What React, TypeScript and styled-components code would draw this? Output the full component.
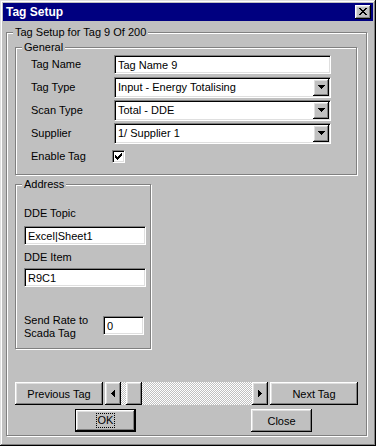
import styled, { createGlobalStyle, css } from "styled-components";

const TAG = 9;
const TAG_COUNT = 200;
const TRACK_WIDTH = 131;
const THUMB_WIDTH = 16;

const GlobalStyle = createGlobalStyle`
  html, body {
    margin: 0;
    padding: 0;
    background: #c0c0c0;
  }
  body {
    font-family: "Liberation Sans", Arial, sans-serif;
    font-size: 11px;
    color: #000;
  }
`;

const raised = css`
  box-shadow: inset -1px -1px #000, inset 1px 1px #fff, inset -2px -2px #808080,
    inset 2px 2px #dfdfdf;
`;

const sunken = css`
  border: 1px solid;
  border-color: #808080 #fff #fff #808080;
  box-shadow: inset 1px 1px #000, inset -1px -1px #dfdfdf;
`;

const CloseGlyph = () => (
  <svg width="8" height="7" viewBox="0 0 8 7" shapeRendering="crispEdges">
    <path
      d="M0 0h2v1h-2z M6 0h2v1h-2z M1 1h2v1h-2z M5 1h2v1h-2z M2 2h4v1h-4z M3 3h2v1h-2z M2 4h4v1h-4z M1 5h2v1h-2z M5 5h2v1h-2z M0 6h2v1h-2z M6 6h2v1h-2z"
      fill="#000"
    />
  </svg>
);

const DownArrow = () => (
  <svg width="7" height="4" viewBox="0 0 7 4" shapeRendering="crispEdges">
    <path d="M0 0h7v1h-7z M1 1h5v1h-5z M2 2h3v1h-3z M3 3h1v1h-1z" fill="#000" />
  </svg>
);

const SideArrow = ({ dir }: { dir: "left" | "right" }) => (
  <svg
    width="4"
    height="7"
    viewBox="0 0 4 7"
    shapeRendering="crispEdges"
    style={dir === "right" ? { transform: "scaleX(-1)" } : undefined}
  >
    <path d="M0 3h1v1h-1z M1 2h1v3h-1z M2 1h1v5h-1z M3 0h1v7h-1z" fill="#000" />
  </svg>
);

const CheckMark = () => (
  <svg width="7" height="7" viewBox="0 0 7 7" shapeRendering="crispEdges">
    <path
      d="M0 2h1v3h-1z M1 3h1v3h-1z M2 4h1v3h-1z M3 3h1v3h-1z M4 2h1v3h-1z M5 1h1v3h-1z M6 0h1v3h-1z"
      fill="#000"
    />
  </svg>
);

export default function App() {
  const thumbOffset = Math.round(
    ((TAG - 1) / (TAG_COUNT - 1)) * (TRACK_WIDTH - THUMB_WIDTH)
  );

  return (
    <>
      <GlobalStyle />
      <Window>
        <TitleBar>
          <Title>Tag Setup</Title>
          <CaptionButton aria-label="Close">
            <CloseGlyph />
          </CaptionButton>
        </TitleBar>

        <GroupBox $width={361} $top={5} $left={3}>
          <Legend>{`Tag Setup for Tag ${TAG} Of ${TAG_COUNT}`}</Legend>
          <Body>
            <GroupBox $width={342} $top={2}>
              <Legend>General</Legend>
              <FieldGrid>
                <FieldLabel>Tag Name</FieldLabel>
                <Edit defaultValue="Tag Name 9" $width={217} readOnly />

                <FieldLabel>Tag Type</FieldLabel>
                <Combo>
                  <ComboText>Input - Energy Totalising</ComboText>
                  <DropButton>
                    <DownArrow />
                  </DropButton>
                </Combo>

                <FieldLabel>Scan Type</FieldLabel>
                <Combo>
                  <ComboText>Total - DDE</ComboText>
                  <DropButton>
                    <DownArrow />
                  </DropButton>
                </Combo>

                <FieldLabel>Supplier</FieldLabel>
                <Combo>
                  <ComboText>1/ Supplier 1</ComboText>
                  <DropButton>
                    <DownArrow />
                  </DropButton>
                </Combo>

                <FieldLabel>Enable Tag</FieldLabel>
                <CheckBox>
                  <CheckMark />
                </CheckBox>
              </FieldGrid>
            </GroupBox>

            <GroupBox $width={136} $top={3}>
              <Legend>Address</Legend>
              <AddressBody>
                <FieldLabel>DDE Topic</FieldLabel>
                <Edit defaultValue="Excel|Sheet1" $width={122} $gap={6} readOnly />
                <FieldLabel $gap={6}>DDE Item</FieldLabel>
                <Edit defaultValue="R9C1" $width={122} $gap={4} readOnly />
                <RateRow>
                  <RateLabel>
                    Send Rate to
                    <br />
                    Scada Tag
                  </RateLabel>
                  <Edit defaultValue="0" $width={41} $gap={2} readOnly />
                </RateRow>
              </AddressBody>
            </GroupBox>

            <NavRow>
              <Button $width={88}>Previous Tag</Button>
              <ScrollBar>
                <ScrollArrow>
                  <SideArrow dir="left" />
                </ScrollArrow>
                <Track>
                  <Thumb style={{ marginLeft: thumbOffset }} />
                </Track>
                <ScrollArrow>
                  <SideArrow dir="right" />
                </ScrollArrow>
              </ScrollBar>
              <Button $width={88}>Next Tag</Button>
            </NavRow>

            <ActionRow>
              <Button $width={61} $default $gap={60}>
                <FocusText>OK</FocusText>
              </Button>
              <Button $width={61} $gap={115}>
                Close
              </Button>
            </ActionRow>
          </Body>
        </GroupBox>
      </Window>
    </>
  );
}

const Window = styled.div`
  box-sizing: border-box;
  width: 376px;
  height: 446px;
  padding: 3px;
  background: #c0c0c0;
  box-shadow: inset -1px -1px #000, inset 1px 1px #dfdfdf, inset -2px -2px #808080,
    inset 2px 2px #fff;
  display: flex;
  flex-direction: column;
  align-items: flex-start;
`;

const TitleBar = styled.div`
  box-sizing: border-box;
  align-self: stretch;
  height: 18px;
  padding: 0 2px 0 3px;
  background: #000080;
  display: flex;
  align-items: center;
  justify-content: space-between;
`;

const Title = styled.span`
  color: #fff;
  font-weight: bold;
  font-size: 12px;
  line-height: 14px;
`;

const CaptionButton = styled.div`
  box-sizing: border-box;
  width: 16px;
  height: 14px;
  background: #c0c0c0;
  ${raised}
  display: flex;
  align-items: center;
  justify-content: center;
  padding: 0 1px 1px 0;
`;

const GroupBox = styled.fieldset<{ $width: number; $top?: number; $left?: number }>`
  box-sizing: border-box;
  width: ${(p) => p.$width}px;
  min-width: 0;
  margin: ${(p) => p.$top ?? 0}px 0 0 ${(p) => p.$left ?? 0}px;
  padding: 0;
  border: 1px solid #808080;
  box-shadow: inset 1px 1px #fff, 1px 1px #fff;
`;

const Legend = styled.legend`
  margin-left: 6px;
  padding: 0 2px;
  line-height: 13px;
  background: #c0c0c0;
  white-space: nowrap;
`;

const Body = styled.div`
  display: flex;
  flex-direction: column;
  align-items: flex-start;
  padding: 0 0 3px 8px;
`;

const FieldGrid = styled.div`
  display: grid;
  grid-template-columns: 83px 217px;
  grid-auto-rows: 21px;
  row-gap: 2px;
  align-items: center;
  padding: 0 0 7px 15px;
`;

const FieldLabel = styled.label<{ $gap?: number }>`
  line-height: 13px;
  white-space: nowrap;
  margin-top: ${(p) => p.$gap ?? 0}px;
`;

const Edit = styled.input<{ $width: number; $gap?: number }>`
  box-sizing: border-box;
  width: ${(p) => p.$width}px;
  height: 19px;
  margin: ${(p) => p.$gap ?? 0}px 0 0;
  padding: 0 0 0 3px;
  font: 11px "Liberation Sans", Arial, sans-serif;
  color: #000;
  background: #fff;
  outline: none;
  ${sunken}
`;

const Combo = styled.div`
  box-sizing: border-box;
  width: 217px;
  height: 21px;
  padding: 1px 1px 1px 3px;
  background: #fff;
  ${sunken}
  display: flex;
  align-items: center;
`;

const ComboText = styled.span`
  flex: 1;
  white-space: nowrap;
  line-height: 13px;
`;

const DropButton = styled.div`
  box-sizing: border-box;
  width: 16px;
  height: 17px;
  background: #c0c0c0;
  ${raised}
  display: flex;
  align-items: center;
  justify-content: center;
  padding-bottom: 1px;
`;

const CheckBox = styled.div`
  box-sizing: border-box;
  width: 13px;
  height: 13px;
  margin-left: -2px;
  background: #fff;
  ${sunken}
  display: flex;
  align-items: center;
  justify-content: center;
`;

const AddressBody = styled.div`
  display: flex;
  flex-direction: column;
  align-items: flex-start;
  padding: 16px 4px 8px 8px;
`;

const RateRow = styled.div`
  display: flex;
  align-items: flex-start;
  margin-top: 27px;
`;

const RateLabel = styled.span`
  width: 79px;
  line-height: 13px;
`;

const NavRow = styled.div`
  display: flex;
  gap: 2px;
  height: 23px;
  margin-top: 33px;
`;

const ActionRow = styled.div`
  display: flex;
  height: 23px;
  margin-top: 4px;
`;

const Button = styled.button<{ $width: number; $default?: boolean; $gap?: number }>`
  box-sizing: border-box;
  width: ${(p) => p.$width}px;
  height: 100%;
  margin: 0 0 0 ${(p) => p.$gap ?? 0}px;
  padding: 0;
  font: 11px "Liberation Sans", Arial, sans-serif;
  color: #000;
  background: #c0c0c0;
  border: ${(p) => (p.$default ? "1px solid #000" : "none")};
  ${raised}
  display: flex;
  align-items: center;
  justify-content: center;
`;

const FocusText = styled.span`
  line-height: 13px;
  padding: 0 1px;
  outline: 1px dotted #000;
`;

const ScrollBar = styled.div`
  display: flex;
  width: ${TRACK_WIDTH + 32}px;
`;

const ScrollArrow = styled.div`
  box-sizing: border-box;
  width: 16px;
  background: #c0c0c0;
  ${raised}
  display: flex;
  align-items: center;
  justify-content: center;
`;

const Track = styled.div`
  flex: 1;
  display: flex;
  background-image: conic-gradient(#fff 0 25%, #c0c0c0 0 50%, #fff 0 75%, #c0c0c0 0);
  background-size: 2px 2px;
`;

const Thumb = styled.div`
  width: ${THUMB_WIDTH}px;
  background: #c0c0c0;
  ${raised}
`;
